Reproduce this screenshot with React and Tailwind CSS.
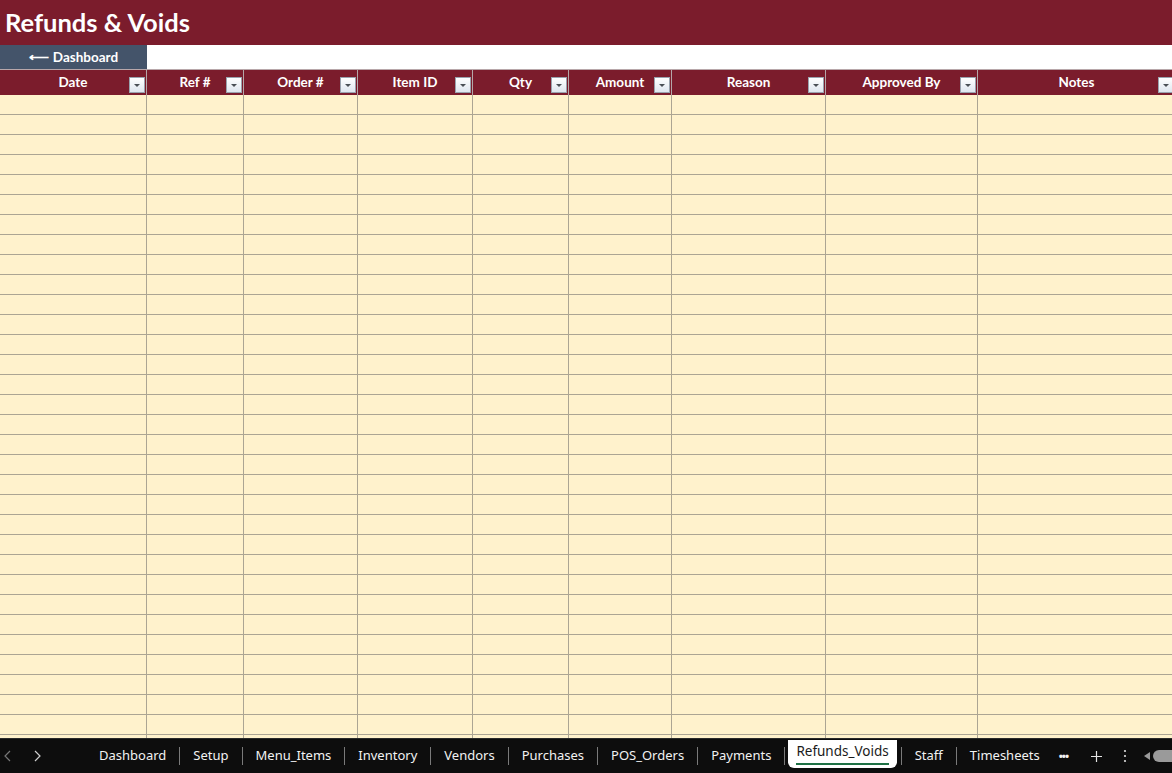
import React from "react";

const cols = ["Date", "Ref #", "Order #", "Item ID", "Qty", "Amount", "Reason", "Approved By", "Notes"];

const gridCols = "grid grid-cols-[147px_97px_114px_115px_96px_103px_154px_152px_198px]";

function FilterBtn() {
  return (
    <div className="absolute right-[1px] bottom-[2px] w-[16px] h-[16px] border border-[#9aa3ae] bg-gradient-to-b from-white to-[#dfe6ef] flex items-center justify-center">
      <svg width="8" height="5" viewBox="0 0 8 5">
        <path d="M1 1 L7 1 L4 4 Z" fill="#4a4f55" />
      </svg>
    </div>
  );
}

const tabs = ["Dashboard", "Setup", "Menu_Items", "Inventory", "Vendors", "Purchases", "POS_Orders", "Payments"];

function Sep({ cls = "mx-[9px]" }) {
  return <div className={`w-px h-[18px] bg-[#7a7a7a] shrink-0 ${cls}`} />;
}

export default function App() {
  const rows = Array.from({ length: 33 });
  return (
    <div className="w-[1172px] h-[773px] overflow-hidden flex flex-col bg-white" style={{ fontFamily: "Lato, 'Open Sans', sans-serif" }}>
      <div className="h-[45px] shrink-0 bg-[#7b1c2c] flex items-center pl-[5px]">
        <span className="text-white font-bold text-[25.5px] leading-none">Refunds &amp; Voids</span>
      </div>
      <div className="h-[24px] shrink-0 flex bg-white">
        <div className="w-[147px] h-full bg-[#44546a] flex items-center justify-center text-white font-bold text-[13.5px]">
          <span className="mr-[4px]">⟵</span>Dashboard
        </div>
      </div>
      <div className="flex-1 overflow-hidden bg-[#fff2cc]">
        <div className={`${gridCols} h-[26px] bg-[#7b1c2c] border-t border-[#b8a7aa]`}>
          {cols.map((c) => (
            <div key={c} className="relative border-r border-[#b5a6a8] flex items-center justify-center text-white font-bold text-[13.5px]">
              {c}
              <FilterBtn />
            </div>
          ))}
        </div>
        {rows.map((_, i) => (
          <div key={i} className={`${gridCols} h-[20px]`}>
            {cols.map((c) => (
              <div key={c} className="border-r border-b border-[#aca593]" />
            ))}
          </div>
        ))}
      </div>
      <div className="h-[35px] shrink-0 bg-[#0d0d0d] border-t border-[#2a2a2a] flex items-center text-[#f2f2f2] text-[13px] whitespace-nowrap" style={{ fontFamily: "'Noto Sans', 'Open Sans', sans-serif" }}>
        <div className="w-[95px] shrink-0 flex items-center pl-[3px] gap-[19px]">
          <svg width="10" height="12" viewBox="0 0 10 12"><path d="M7 1 L2 6 L7 11" stroke="#777" strokeWidth="1.2" fill="none" /></svg>
          <svg width="10" height="12" viewBox="0 0 10 12"><path d="M3 1 L8 6 L3 11" stroke="#cfcfcf" strokeWidth="1.2" fill="none" /></svg>
        </div>
        {tabs.map((t) => (
          <React.Fragment key={t}>
            <div className="px-[4px] shrink-0">{t}</div>
            <Sep />
          </React.Fragment>
        ))}
        <div className="-ml-[6px] shrink-0 h-[28px] self-end mb-[5px] bg-white rounded-b-[6px] px-[8px] flex flex-col items-center justify-center text-[#1a1a1a] text-[13.5px]">
          <span className="leading-none mt-[2px]">Refunds_Voids</span>
          <span className="w-full h-[2px] bg-[#1e7145] mt-[4px]" />
        </div>
        <Sep cls="ml-[4px] mr-[13px]" />
        <div className="shrink-0">Staff</div>
        <Sep cls="mx-[13px]" />
        <div className="shrink-0">Timesheets</div>
        <div className="ml-[19px] shrink-0 text-[11px] font-bold tracking-[-1px]">•••</div>
        <svg className="ml-[22px] shrink-0" width="13" height="13" viewBox="0 0 13 13"><path d="M6.5 1 V12 M1 6.5 H12" stroke="#e5e5e5" strokeWidth="1.2" /></svg>
        <svg className="ml-[20px] shrink-0" width="4" height="14" viewBox="0 0 4 14"><circle cx="2" cy="2" r="1.1" fill="#ddd" /><circle cx="2" cy="7" r="1.1" fill="#ddd" /><circle cx="2" cy="12" r="1.1" fill="#ddd" /></svg>
        <div className="ml-[16px] shrink-0 flex items-center gap-[2px]">
          <svg width="8" height="10" viewBox="0 0 8 10"><path d="M7 1 L1 5 L7 9 Z" fill="#9a9a9a" /></svg>
          <div className="w-[20px] h-[12px] rounded-l-full bg-[#9a9a9a]" />
        </div>
      </div>
    </div>
  );
}
